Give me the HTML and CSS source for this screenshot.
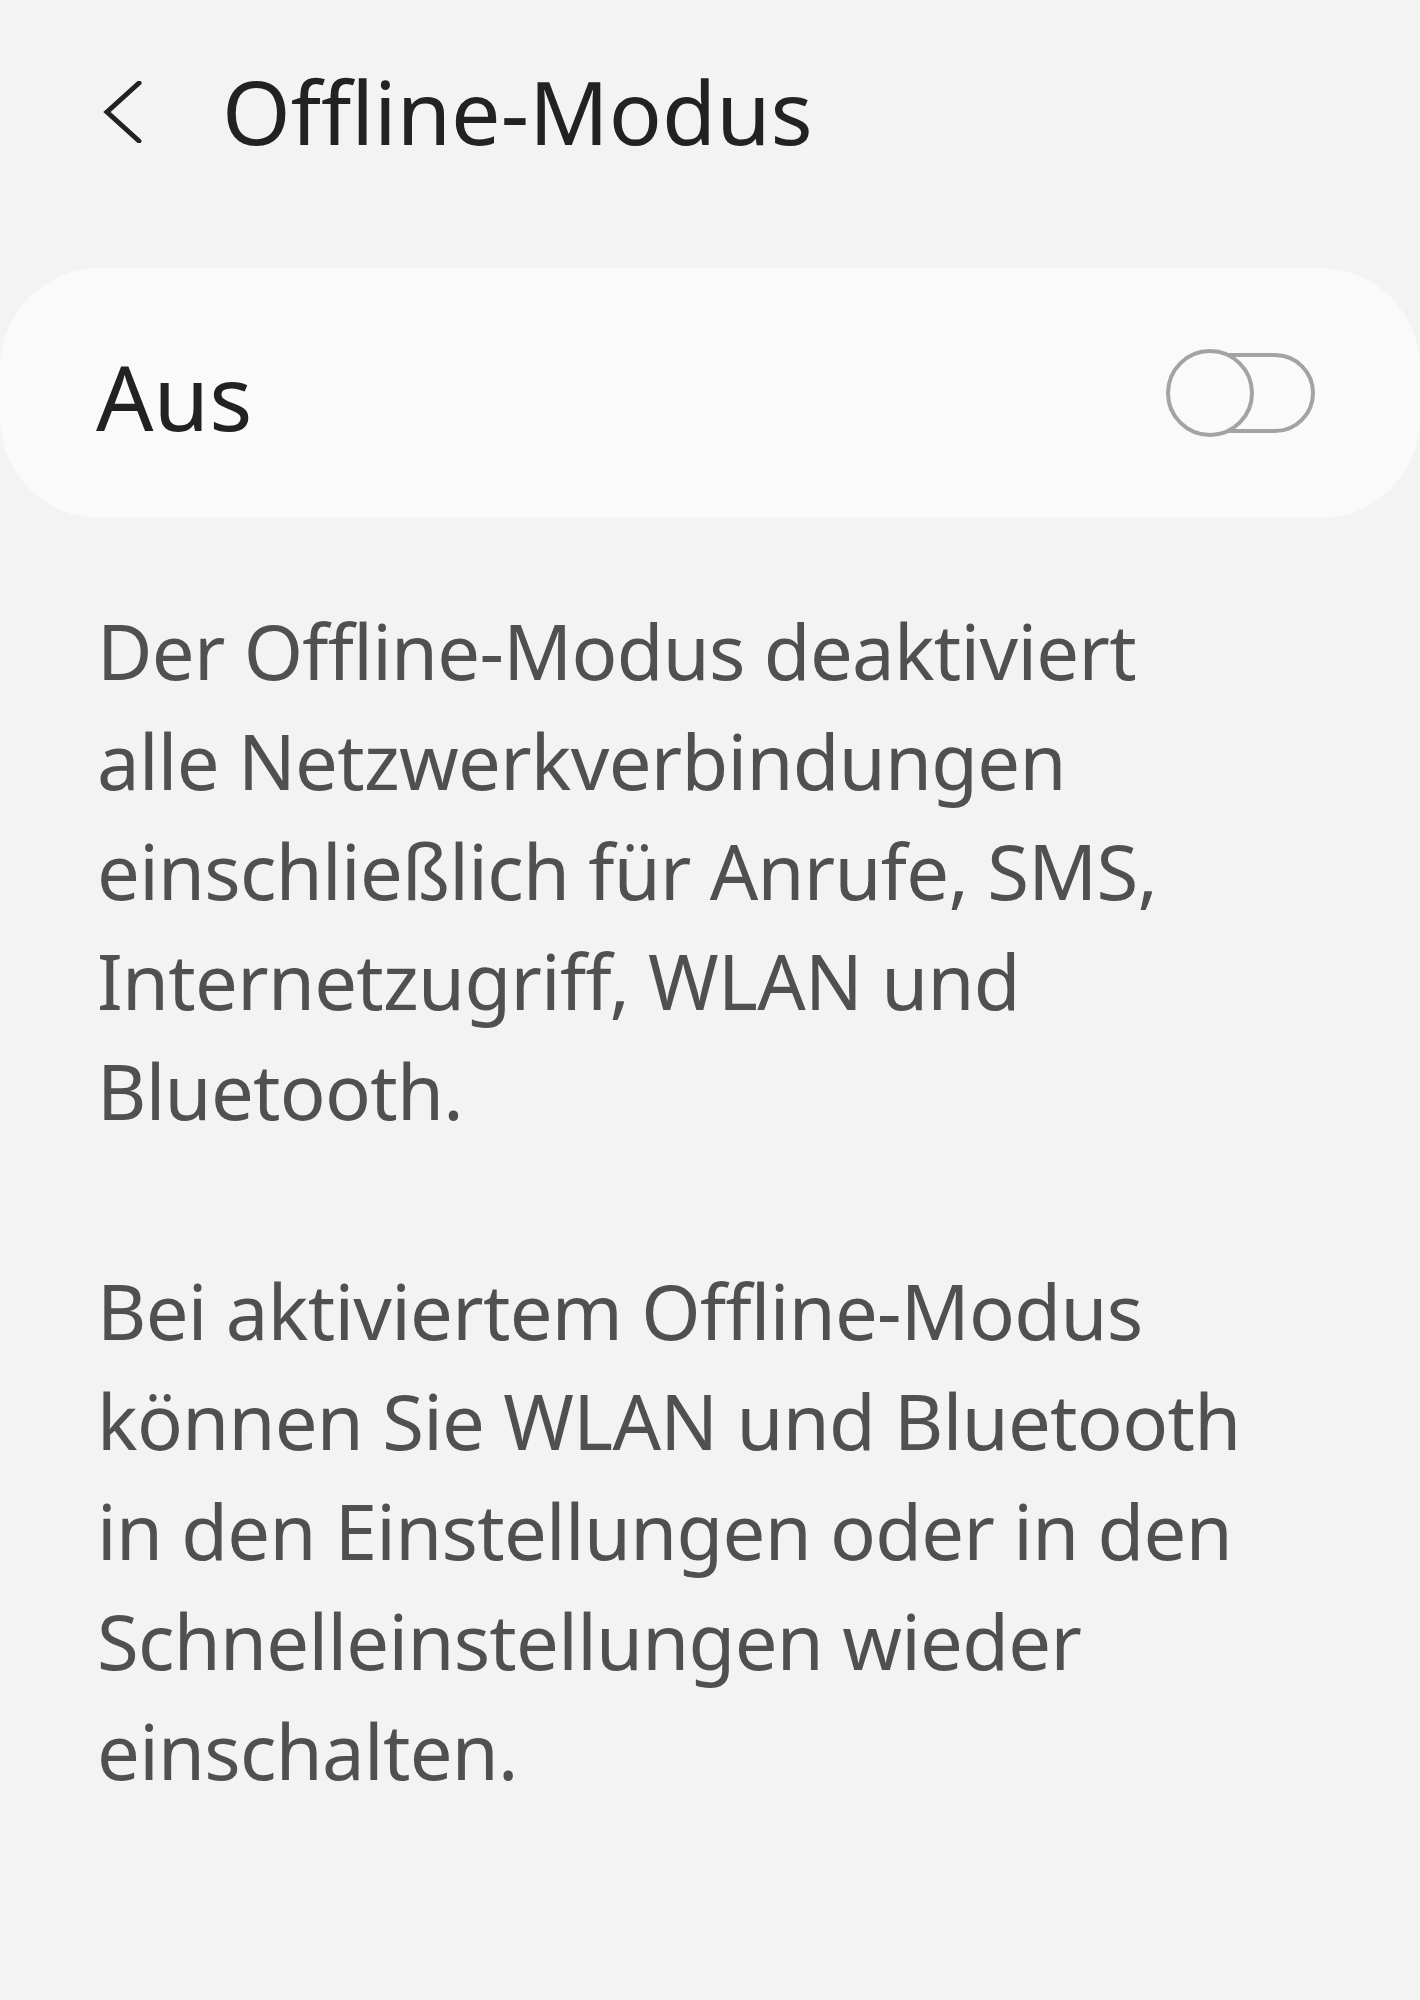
FILE: index.html
```html
<!DOCTYPE html>
<html lang="de">
<head>
    <meta charset="UTF-8">
    <meta name="viewport" content="width=device-width, initial-scale=1.0">
    <title>Offline-Modus</title>
    <link rel="stylesheet" href="styles.css">
</head>
<body>

<div class="header">
    <a class="back" href="#">
        <svg width="40" height="62" viewBox="0 0 40 62">
            <polyline points="37,2 5,31 37,60" fill="none" stroke="#222222" stroke-width="5" stroke-linecap="round" stroke-linejoin="miter"/>
        </svg>
    </a>
    <div class="title">Offline-Modus</div>
</div>

<div class="card">
    <div class="card-label">Aus</div>
    <div class="switch">
        <div class="switch-track"></div>
        <div class="switch-knob"></div>
    </div>
</div>

<div class="description">
    <p>Der Offline-Modus deaktiviert alle Netzwerkverbindungen einschließlich für Anrufe, SMS, Internetzugriff, WLAN und Bluetooth.</p>
    <p>Bei aktiviertem Offline-Modus können Sie WLAN und Bluetooth in den Einstellungen oder in den Schnelleinstellungen wieder einschalten.</p>
</div>

</body>
</html>
```
FILE: styles.css
```css
body {
    font-family: "Noto Sans", "Open Sans", sans-serif;
    background-color: #F3F3F3;
    margin: 0;
    height: 2000px;
}
.header {
    display: flex;
    align-items: center;
    padding: 59px 0 0 102px;
}
.back {
    display: block;
    width: 40px;
    height: 62px;
}
.back svg {
    display: block;
}
.title {
    font-size: 88px;
    line-height: 1.2;
    color: #222222;
    margin-left: 80px;
}
.card {
    background-color: #FAFAFA;
    margin-top: 103px;
    height: 250px;
    border-radius: 100px;
    display: flex;
    align-items: center;
    justify-content: space-between;
    padding: 0 105px 0 96px;
    box-sizing: border-box;
}
.card-label {
    font-size: 90px;
    line-height: 1.2;
    color: #222222;
    padding-top: 6px;
}
.switch {
    position: relative;
    width: 149px;
    height: 88px;
}
.switch-track {
    position: absolute;
    top: 4px;
    left: 14px;
    right: 0;
    height: 80px;
    border: 4px solid #A3A3A3;
    border-radius: 40px;
    box-sizing: border-box;
}
.switch-knob {
    position: absolute;
    top: 0;
    left: 0;
    width: 88px;
    height: 88px;
    border: 4px solid #A3A3A3;
    border-radius: 50%;
    background-color: #FAFAFA;
    box-sizing: border-box;
}
.description {
    padding: 78px 0 0 97px;
    width: 1155px;
}
.description p {
    font-size: 76px;
    letter-spacing: -0.7px;
    line-height: 110px;
    color: #505050;
    margin: 0 0 110px 0;
}
```
